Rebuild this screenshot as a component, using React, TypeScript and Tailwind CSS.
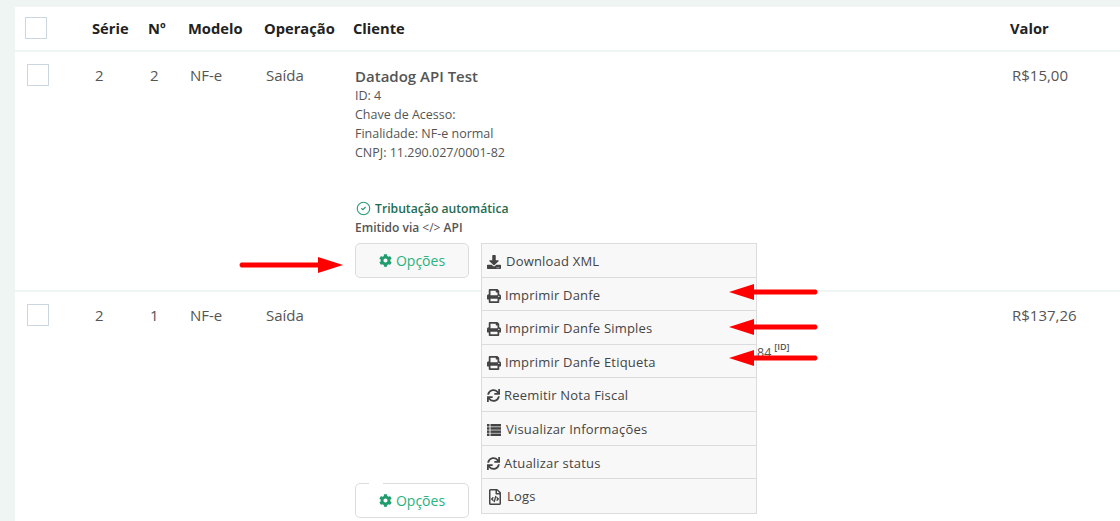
import { FaCog, FaDownload, FaPrint, FaRegFileCode, FaSync } from "react-icons/fa";
import { CircleCheck } from "lucide-react";
import type { ReactNode } from "react";

function ListIcon() {
  return (
    <svg viewBox="0 0 14 12" className="h-[12px] w-[14px] fill-current">
      <rect x="0" y="0" width="2.5" height="2.5" />
      <rect x="3.5" y="0" width="10.5" height="2.5" />
      <rect x="0" y="3.2" width="2.5" height="2.5" />
      <rect x="3.5" y="3.2" width="10.5" height="2.5" />
      <rect x="0" y="6.4" width="2.5" height="2.5" />
      <rect x="3.5" y="6.4" width="10.5" height="2.5" />
      <rect x="0" y="9.5" width="2.5" height="2.5" />
      <rect x="3.5" y="9.5" width="10.5" height="2.5" />
    </svg>
  );
}

const menu: { icon: ReactNode; label: string; h: string; gap: string }[] = [
  { icon: <FaDownload className="text-[14px]" />, label: "Download XML", h: "h-[34px] pt-[2px]", gap: "gap-[5px]" },
  { icon: <FaPrint className="text-[14px]" />, label: "Imprimir Danfe", h: "h-[33px] pt-[3px]", gap: "gap-[4px]" },
  { icon: <FaPrint className="text-[14px]" />, label: "Imprimir Danfe Simples", h: "h-[34px] pt-[2px]", gap: "gap-[4px]" },
  { icon: <FaPrint className="text-[14px]" />, label: "Imprimir Danfe Etiqueta", h: "h-[33px] pt-[3px]", gap: "gap-[4px]" },
  { icon: <FaSync className="text-[13px]" />, label: "Reemitir Nota Fiscal", h: "h-[34px] pt-[2px]", gap: "gap-[4px]" },
  { icon: <ListIcon />, label: "Visualizar Informações", h: "h-[34px] pt-[2px]", gap: "gap-[5px]" },
  { icon: <FaSync className="text-[13px]" />, label: "Atualizar status", h: "h-[33px] pt-[3px]", gap: "gap-[4px]" },
  { icon: <FaRegFileCode className="text-[16px]" />, label: "Logs", h: "h-[34px] pt-[2px]", gap: "gap-[4px]" },
];

const cols = "grid grid-cols-[77px_56px_40px_76px_89px_657px_1fr]";

function Check() {
  return <div className="h-[22px] w-[22px] border border-[#cbd6e0] bg-white" />;
}

function Options({ white }: { white?: boolean }) {
  return (
    <button
      className={`relative flex h-[35px] w-[114px] items-center justify-center gap-[4px] rounded-[5px] border border-[#dcdcdc] text-[14px] text-[#2bb27f] ${white ? "bg-white" : "bg-[#f8f8f8]"}`}
    >
      {white && <span className="absolute -top-px left-[13px] h-px w-[14px] bg-white" />}
      <FaCog className="text-[13px] text-[#1f9d6e]" />
      Opções
    </button>
  );
}

// seta vermelha das anotacoes
function ArrowRight({ className }: { className: string }) {
  return (
    <svg viewBox="0 0 105 16" className={`absolute h-[16px] w-[105px] ${className}`}>
      <path d="M105 8 L80 0 V5.5 H3 Q0 8 3 10.5 H80 V16 Z" fill="#ff0000" />
    </svg>
  );
}

function ArrowLeft({ className }: { className: string }) {
  return (
    <svg viewBox="0 0 90 16" className={`absolute h-[16px] w-[90px] ${className}`}>
      <path d="M0 8 L25 0 V5.5 H87 Q90 8 87 10.5 H25 V16 Z" fill="#ff0000" />
    </svg>
  );
}

export default function App() {
  return (
    <div className="relative h-[521px] w-[1120px] overflow-hidden bg-[#eff5f3] pl-[15px] pt-[7px] font-['Open_Sans','Noto_Sans',sans-serif] text-[#555]">
      <div className="h-[514px] bg-white">
        <div className={`${cols} h-[45px] items-center border-b-2 border-[#eff5f3] text-[14.7px] font-bold text-[#222]`}>
          <div className="-mt-[2px] pl-[10px]">
            <Check />
          </div>
          <div>Série</div>
          <div>Nº</div>
          <div>Modelo</div>
          <div>Operação</div>
          <div>Cliente</div>
          <div>Valor</div>
        </div>
        <div className="h-[240px] border-b-2 border-[#eff5f3]">
          <div className={`${cols} pt-[12px] text-[15px]`}>
            <div className="pl-[12px]">
              <Check />
            </div>
            <div className="pl-[3px]">2</div>
            <div className="pl-[2px]">2</div>
            <div className="pl-[2px]">NF-e</div>
            <div className="pl-[2px]">Saída</div>
            <div className="pl-[2px] pt-[2px]">
              <div className="text-[15px] font-semibold leading-[20px]">Datadog API Test</div>
              <div className="text-[12.5px] leading-[19px]">
                <div>ID: 4</div>
                <div>Chave de Acesso:</div>
                <div>Finalidade: NF-e normal</div>
                <div>CNPJ: 11.290.027/0001-82</div>
              </div>
              <div className="mt-[37px] flex items-center gap-[4px] text-[12.2px] font-semibold leading-[19px] text-[#1f6b52]">
                <CircleCheck className="ml-px h-[15px] w-[15px] text-[#2a9d72]" strokeWidth={1.75} />
                Tributação automática
              </div>
              <div className="mt-px text-[12px] font-semibold leading-[18px]">
                Emitido via <span className="font-normal">&lt;/&gt;</span> API
              </div>
              <div className="mt-[6px]">
                <Options />
              </div>
            </div>
            <div className="pl-[2px]">R$15,00</div>
          </div>
        </div>
        <div className={`${cols} pt-[12px] text-[15px]`}>
          <div className="pl-[12px]">
            <Check />
          </div>
          <div className="pl-[3px]">2</div>
          <div className="pl-[2px]">1</div>
          <div className="pl-[2px]">NF-e</div>
          <div className="pl-[2px]">Saída</div>
          <div className="pl-[2px]">
            <div className="ml-[402px] mt-[39px] flex text-[12.5px] leading-[19px]">
              84 <sup className="ml-[3px] mt-[3px] text-[9px] font-semibold leading-none">[ID]</sup>
            </div>
            <div className="mt-[121px]">
              <Options white />
            </div>
          </div>
          <div className="pl-[2px]">R$137,26</div>
        </div>
      </div>

      <div className="absolute left-[481px] top-[243px] w-[276px] border border-[#dcdcdc] bg-[#f8f8f8] text-[13px] tracking-[0.2px] text-[#444]">
        {menu.map((item, i) => (
          <div
            key={item.label}
            className={`flex items-center pl-[5px] ${item.h} ${item.gap} ${i < menu.length - 1 ? "border-b border-[#dcdcdc]" : ""}`}
          >
            {item.icon}
            {item.label}
          </div>
        ))}
      </div>

      <ArrowRight className="left-[238px] top-[257px]" />
      <ArrowLeft className="left-[729px] top-[284px]" />
      <ArrowLeft className="left-[729px] top-[319px]" />
      <ArrowLeft className="left-[729px] top-[350px]" />
    </div>
  );
}
